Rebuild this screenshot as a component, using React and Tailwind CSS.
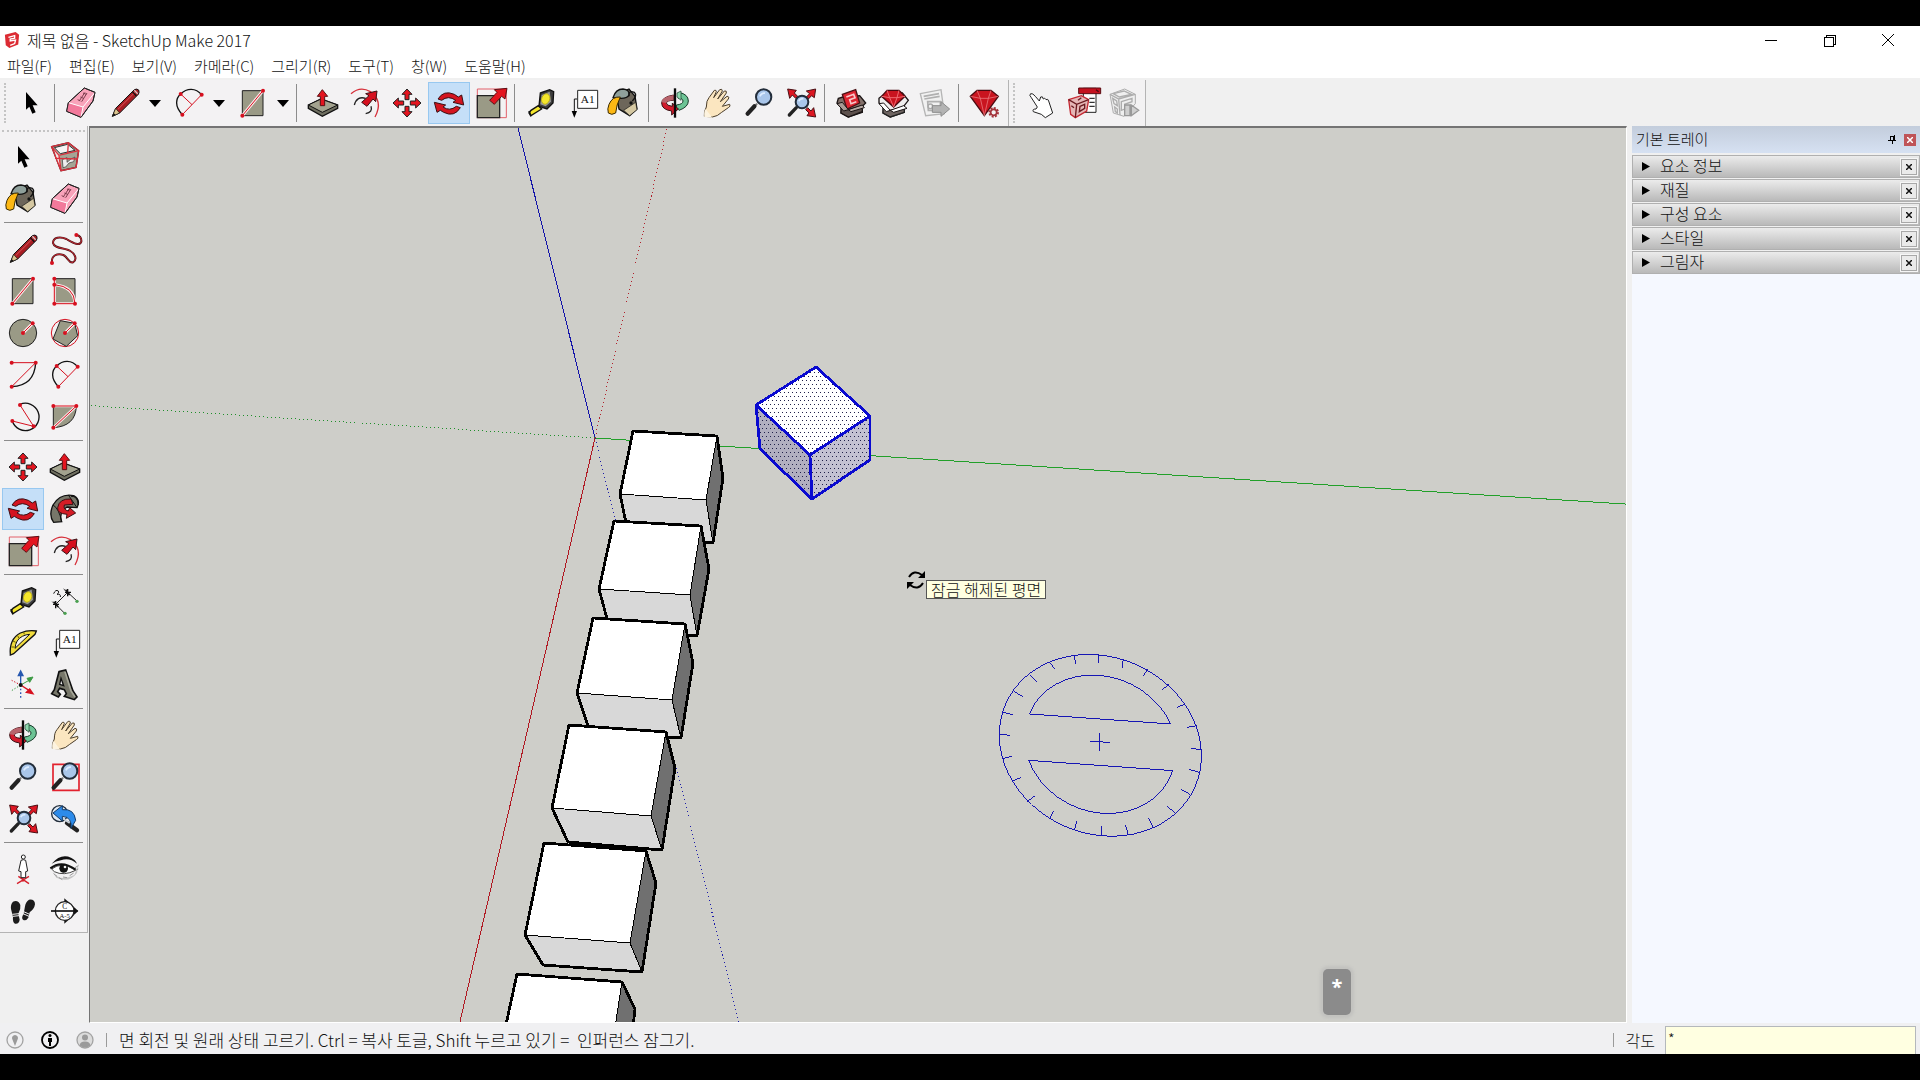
import React from "react";

const RED = "#d6101f";
const TAUPE = "#9a9a86";

const Icon = ({ children }) => (
  <svg viewBox="0 0 96 96" className="block h-8 w-8 overflow-visible" fill="none" aria-hidden="true">
    {children}
  </svg>
);

const Dots = ({ points }) =>
  points.map(([x, y]) => <circle key={`${x}-${y}`} cx={x} cy={y} r="6" fill={RED} />);

const SelectIcon = () => (
  <Icon>
    <path d="M33 15V68L43 59L52 80L62 76L53 55H68Z" fill="#000" />
  </Icon>
);

const ComponentIcon = () => (
  <Icon>
    <path d="M8 17L58 5L89 29L81 79L36 89Z" fill="#a5a595" stroke="#222" strokeWidth="4" />
    <path d="M14 20L32 42L36 84L24 60Z" fill="#f0e4e4" />
    <path d="M16 20L56 10L78 28L34 38Z" fill="#f4f4f4" stroke="#333" strokeWidth="3" />
    <path d="M40 56L54 50V64L66 54L78 48L74 62L60 66L50 78L42 80Z" fill="#eee" stroke="#333" strokeWidth="2" />
    <path d="M8 17L58 5L89 29L81 79L36 89ZM8 17L30 43L89 29M30 43L36 89M58 5L56 36M18 52L86 54" stroke="#d9303c" strokeWidth="4" />
  </Icon>
);

const PaintIcon = () => (
  <Icon>
    <path d="M22 22L60 6L78 28L84 66L62 86L30 66Z" fill="#6d665a" stroke="#111" strokeWidth="4" />
    <path d="M44 70L80 46L84 68L62 86Z" fill="#d5c8a2" stroke="#111" strokeWidth="2" />
    <path d="M12 32Q20 6 42 6Q62 8 60 24Q54 36 30 34Z" fill="#8fa09b" stroke="#111" strokeWidth="4" />
    <path d="M60 28Q58 8 76 16Q86 26 70 42" stroke="#111" strokeWidth="4" />
    <circle cx="66" cy="48" r="5" fill="#111" />
    <path d="M34 30Q10 28 0 52Q-6 66 -2 78Q8 86 20 78Q22 54 34 30Z" fill="#fdb813" stroke="#3a2a00" strokeWidth="3" />
  </Icon>
);

const EraserIcon = () => (
  <Icon>
    <path d="M58 3L90 16L84 42L48 91L5 73L10 47Z" fill="#f9a3ba" stroke="#222" strokeWidth="3" strokeLinejoin="round" />
    <path d="M10 47L54 60L48 91L5 73Z" fill="#f2799b" />
    <path d="M10 47L54 60L90 16M54 60L48 91" stroke="#fff" strokeWidth="3" />
    <path d="M44 40L60 16M50 44L66 18M38 38L46 42M46 30L56 34M54 18L64 22" stroke="#7a3c4c" strokeWidth="3" />
    <path d="M58 3L90 16L84 42L48 91L5 73L10 47Z" stroke="#222" strokeWidth="3" strokeLinejoin="round" />
  </Icon>
);

const LineIcon = () => (
  <Icon>
    <path d="M10 88L20 64L76 8Q84 4 89 9Q92 16 88 22L32 78Z" fill="#a81c22" stroke="#111" strokeWidth="3" />
    <path d="M26 68L78 16" stroke="#d8555a" strokeWidth="3" />
    <path d="M10 88L20 64L32 78Z" fill="#dcc58f" stroke="#111" strokeWidth="2" />
    <path d="M10 88L14 78L20 84Z" fill="#111" />
    <path d="M70 14L82 27" stroke="#111" strokeWidth="4" />
    <path d="M76 10L86 20" stroke="#d9c7c7" strokeWidth="4" />
  </Icon>
);

const FreehandIcon = () => (
  <Icon>
    <path
      d="M9 90C6 66 26 60 43 66C58 72 58 92 72 88C86 80 78 62 64 54C50 44 16 48 12 30C12 12 34 10 52 18C70 28 92 42 97 26C98 14 92 8 82 6"
      stroke="#4a1216"
      strokeWidth="6"
    />
    <path
      d="M9 90C6 66 26 60 43 66C58 72 58 92 72 88C86 80 78 62 64 54C50 44 16 48 12 30C12 12 34 10 52 18C70 28 92 42 97 26C98 14 92 8 82 6"
      stroke="#c42832"
      strokeWidth="3"
    />
    <Dots points={[[9, 90], [82, 6]]} />
  </Icon>
);

const RectIcon = () => (
  <Icon>
    <path d="M16 11H78V86H16Z" fill={TAUPE} stroke="#222" strokeWidth="3" />
    <path d="M16 86L78 11" stroke="#fbeaea" strokeWidth="9" />
    <path d="M16 86L78 11" stroke={RED} strokeWidth="3" />
    <Dots points={[[16, 86], [78, 11]]} />
  </Icon>
);

const RotatedRectIcon = () => (
  <Icon>
    <path d="M16 11H78V86H16Z" fill={TAUPE} stroke="#222" strokeWidth="3" />
    <path d="M16 11V86H78Q76 34 16 29" stroke="#fbeaea" strokeWidth="9" />
    <path d="M16 11V86H78Q76 34 16 29" stroke={RED} strokeWidth="3" />
    <Dots points={[[16, 11], [16, 29], [16, 86], [78, 86]]} />
  </Icon>
);

const CircleIcon = () => (
  <Icon>
    <circle cx="48" cy="48" r="41" fill={TAUPE} stroke="#222" strokeWidth="3" />
    <path d="M48 48L77 19" stroke="#fbeaea" strokeWidth="9" />
    <path d="M48 48L77 19" stroke={RED} strokeWidth="3" />
    <Dots points={[[48, 48], [77, 19]]} />
  </Icon>
);

const PolygonIcon = () => (
  <Icon>
    <circle cx="48" cy="48" r="41" stroke={RED} strokeWidth="3" />
    <path d="M34 11L77 19L86 56L52 88L12 66Z" fill={TAUPE} stroke="#222" strokeWidth="3" />
    <path d="M48 48L77 19" stroke="#fbeaea" strokeWidth="9" />
    <path d="M48 48L77 19" stroke={RED} strokeWidth="3" />
    <Dots points={[[48, 48], [77, 19]]} />
  </Icon>
);

const ArcIcon = () => (
  <Icon>
    <path d="M14 83Q82 80 86 11" stroke="#111" strokeWidth="4" />
    <path d="M14 11H86L14 83" stroke={RED} strokeWidth="3" />
    <Dots points={[[14, 11], [86, 11], [14, 83]]} />
  </Icon>
);

const TwoPointArcIcon = () => (
  <Icon>
    <path d="M28 83C4 58 8 34 23 21C42 2 68 2 86 23" stroke="#111" strokeWidth="4" />
    <path d="M28 83L86 23M23 21L57 53" stroke={RED} strokeWidth="3" />
    <Dots points={[[23, 21], [86, 23], [28, 83]]} />
  </Icon>
);

const ThreePointArcIcon = () => (
  <Icon>
    <path d="M39 10A41 41 0 1 1 16 60" stroke="#111" strokeWidth="4" />
    <path d="M39 12L80 76L16 60" stroke={RED} strokeWidth="3" />
    <Dots points={[[39, 12], [16, 60], [80, 76]]} />
  </Icon>
);

const PieIcon = () => (
  <Icon>
    <path d="M13 15H82Q80 76 13 80Z" fill={TAUPE} stroke="#222" strokeWidth="3" />
    <path d="M13 80L82 15H13" stroke="#fbeaea" strokeWidth="8" />
    <path d="M13 80L82 15H13" stroke={RED} strokeWidth="3" />
    <Dots points={[[13, 15], [82, 15], [13, 80]]} />
  </Icon>
);

const MoveIcon = () => (
  <Icon>
    {[0, 90, 180, 270].map((turn) => (
      <path
        key={turn}
        transform={`rotate(${turn} 48 48)`}
        d="M48 6L63 22H54V38H42V22H33Z"
        fill="#e3141f"
        stroke="#222"
        strokeWidth="3"
      />
    ))}
  </Icon>
);

const PushPullIcon = () => (
  <Icon>
    <path d="M4 54L42 36L92 54V64L46 88L4 64Z" fill="#6f6f60" stroke="#111" strokeWidth="4" />
    <path d="M4 54L42 36L92 54L46 76Z" fill="#a3a38f" stroke="#111" strokeWidth="3" />
    <path d="M46 8L62 28H53V56H40V28H31Z" fill="#e3141f" stroke="#5a1014" strokeWidth="3" />
  </Icon>
);

const RotateIcon = () => (
  <Icon>
    <path d="M15 36Q32 8 64 22L76 30L86 24L92 54L60 46L68 40Q46 24 26 40Z" fill="#d41420" stroke="#3a1014" strokeWidth="3" />
    <path d="M82 62Q64 92 32 76L22 70L12 76L4 46L38 54L30 60Q50 74 70 58Z" fill="#d41420" stroke="#3a1014" strokeWidth="3" />
  </Icon>
);

const FollowMeIcon = () => (
  <Icon>
    <path d="M74 8Q34 0 12 36Q-2 68 14 88L38 86Q28 58 54 42L84 44Q96 20 74 8Z" fill="#77776a" stroke="#111" strokeWidth="4" />
    <path d="M12 36Q30 46 38 86M58 6L84 44M66 10Q86 8 88 36" stroke="#111" strokeWidth="3" />
    <path d="M66 18Q30 16 26 44Q24 62 54 64L52 76L80 60L62 44L58 54Q42 50 46 36L72 34Z" fill="#d41c26" stroke="#3a1014" strokeWidth="3" />
  </Icon>
);

const ScaleIcon = () => (
  <Icon>
    <path d="M7 6H94V92H7Z" stroke="#e2606a" strokeWidth="3" />
    <path d="M7 26H74V92H7Z" fill={TAUPE} stroke="#222" strokeWidth="4" />
    <path d="M96 4L90 36L80 28L58 52L44 40L66 16L58 8Z" fill="#e3141f" stroke="#5a1014" strokeWidth="3" />
  </Icon>
);

const OffsetIcon = () => (
  <Icon>
    <path d="M6 20Q34 -4 64 14Q104 42 78 90" stroke="#d6303a" strokeWidth="4" />
    <path d="M16 54Q24 26 50 34M66 58Q72 76 50 80" stroke="#222" strokeWidth="4" />
    <path d="M84 12L80 44L72 36L54 58L38 46L60 26L50 20Z" fill="#d6101f" stroke="#3a1014" strokeWidth="3" />
  </Icon>
);

const TapeIcon = () => (
  <Icon>
    <path d="M40 56L18 70L12 78L18 86L50 66Z" fill="#f4e62c" stroke="#111" strokeWidth="4" />
    <path d="M12 72L18 88" stroke="#111" strokeWidth="5" />
    <path d="M46 18L74 8L86 14L84 48L66 66L42 58Z" fill="#3d3d3d" stroke="#111" strokeWidth="4" />
    <path d="M50 24L74 14L78 44L62 58L46 52Z" fill="#9a9a9a" />
    <ellipse cx="62" cy="36" rx="12" ry="16" fill="#f4e62c" stroke="#b8a900" strokeWidth="2" transform="rotate(20 62 36)" />
  </Icon>
);

const DimensionIcon = () => (
  <Icon>
    <path d="M20 58L56 22L84 48M20 58L46 84M10 50L24 64M44 12L60 28" stroke="#222" strokeWidth="3" />
    <path d="M12 58H30M20 48V70M48 22H66M56 12V34M14 50L28 66M50 14L62 30" stroke="#111" strokeWidth="4" />
    <path d="M14 26Q20 12 28 18Q32 24 24 28Q36 26 34 36" stroke="#111" strokeWidth="3" />
    <circle cx="84" cy="49" r="5" fill="#4aa050" />
    <circle cx="48" cy="85" r="5" fill="#4aa050" />
  </Icon>
);

const ProtractorIcon = () => (
  <Icon>
    <path d="M10 84Q6 36 40 18Q64 8 88 12L84 22L20 80Z" fill="#f1dc3e" stroke="#111" strokeWidth="4" />
    <path d="M24 64Q26 38 46 28Q58 22 68 22Z" fill="#f3f2f3" stroke="#111" strokeWidth="3" />
    <path d="M14 60L22 60M18 42L26 46M32 26L36 34M50 16L52 22" stroke="#6b5f00" strokeWidth="3" />
  </Icon>
);

const TextIcon = () => (
  <Icon>
    <path d="M32 10H92V64H32Z" fill="#fff" stroke="#222" strokeWidth="3" />
    <path d="M30 36H22V74" stroke="#111" strokeWidth="3" />
    <path d="M14 72H30L22 92Z" fill="#000" />
    <text x="62" y="48" textAnchor="middle" fontSize="34" fill="#111" fontFamily="Liberation Serif, serif">
      A1
    </text>
  </Icon>
);

const AxesIcon = () => (
  <Icon>
    <path d="M41 48V88" stroke="#3057b5" strokeWidth="4" strokeDasharray="5 6" />
    <path d="M41 48L14 34" stroke={RED} strokeWidth="3" strokeDasharray="4 5" />
    <path d="M41 48L12 66" stroke="#3d9b45" strokeWidth="3" strokeDasharray="4 5" />
    <path d="M41 48V18M34 20L41 6L48 20Z" fill="#2557b0" stroke="#2557b0" strokeWidth="4" />
    <path d="M41 48L66 34M60 28L78 24L68 40Z" fill="#3d9b45" stroke="#3d9b45" strokeWidth="3" />
    <path d="M41 48L66 64M68 60L78 74L58 70Z" fill={RED} stroke={RED} strokeWidth="4" />
    <circle cx="41" cy="48" r="6" fill="#111" />
  </Icon>
);

const Text3dIcon = () => (
  <Icon>
    <path d="M30 8L50 3L72 66L84 84L76 92L46 82L52 74L46 62L32 58L26 68L34 76L28 84L8 74L16 62Z" fill="#77776a" stroke="#111" strokeWidth="5" />
    <path d="M36 28L44 50L32 46Z" fill="#f3f2f3" stroke="#111" strokeWidth="4" />
    <path d="M48 8L66 66L78 84" stroke="#a6a698" strokeWidth="5" />
  </Icon>
);

const OrbitIcon = () => (
  <Icon>
    <path d="M60 16Q88 22 88 42Q88 60 60 70L52 62V54Q72 52 72 42Q72 34 58 34Z" fill="#6cc495" stroke="#163a28" strokeWidth="3" />
    <path d="M44 24Q8 30 8 48Q8 68 38 72V84L58 66L40 48V58Q22 56 22 48Q24 40 44 40Z" fill="#d21a2b" stroke="#3a1014" strokeWidth="3" />
    <path d="M44 24Q8 30 8 46L22 48Q24 40 44 40Z" fill="#b8636b" />
    <path d="M48 4V92" stroke="#0b0b0b" strokeWidth="7" />
    <path d="M54 18L66 12V40L54 30Z" fill="#8ed8ae" stroke="#163a28" strokeWidth="2" />
  </Icon>
);

const PanIcon = () => (
  <Icon>
    <path
      d="M10 88Q8 74 16 60Q16 40 24 32L40 10Q46 8 46 14L38 32L56 8Q64 4 64 12L50 36L70 12Q78 10 76 18L58 44L78 28Q86 28 82 36L64 58L86 52Q90 58 82 62L62 76Q50 88 34 90Z"
      fill="#fbe6c0"
      stroke="#4a3d2a"
      strokeWidth="3"
      strokeLinejoin="round"
    />
    <path d="M10 90Q8 74 14 66L34 92Z" fill="#fdf3df" />
  </Icon>
);

const Lens = ({ cx = 62, cy = 30, r = 23 }) => (
  <>
    <circle cx={cx} cy={cy} r={r} fill="#a9c6ea" stroke="#222d3a" strokeWidth="6" />
    <path d={`M${cx - r / 2} ${cy - 2}Q${cx - 6} ${cy - r / 2 - 2} ${cx + 4} ${cy - r / 2}`} stroke="#dcecff" strokeWidth="5" />
  </>
);

const ZoomIcon = () => (
  <Icon>
    <path d="M42 50L34 60" stroke="#777" strokeWidth="6" />
    <path d="M34 58L14 80" stroke="#222" strokeWidth="13" strokeLinecap="round" />
    <Lens />
  </Icon>
);

const ZoomWindowIcon = () => (
  <Icon>
    <path d="M12 10H90V88H12Z" stroke="#e2222e" strokeWidth="5" />
    <path d="M42 50L34 60" stroke="#777" strokeWidth="6" />
    <path d="M34 58L14 80" stroke="#222" strokeWidth="13" strokeLinecap="round" />
    <Lens />
  </Icon>
);

const ZoomExtentsIcon = () => (
  <Icon>
    {[0, 90, 180].map((turn) => (
      <path
        key={turn}
        transform={`rotate(${turn} 50 48)`}
        d="M8 6L34 10L28 18L38 28L32 34L22 24L14 34Z"
        fill="#dc1622"
        stroke="#4a1014"
        strokeWidth="3"
      />
    ))}
    <path d="M34 62L13 84" stroke="#222" strokeWidth="10" strokeLinecap="round" />
    <Lens cx={51} cy={45} r={19} />
  </Icon>
);

const PreviousIcon = () => (
  <Icon>
    <circle cx="32" cy="32" r="24" fill="#dfe9f4" stroke="#222d3a" strokeWidth="4" />
    <path d="M54 60L84 82" stroke="#222" strokeWidth="13" strokeLinecap="round" />
    <path d="M42 46Q52 54 62 60" stroke="#c9d3dd" strokeWidth="5" />
    <path d="M12 30L40 8V20Q76 16 80 52L66 76Q70 42 40 40V54Z" fill="#2c8bea" stroke="#123a66" strokeWidth="3" />
  </Icon>
);

const PositionCameraIcon = () => (
  <Icon>
    <path d="M30 92L66 70M66 92L34 70M48 64V86" stroke="#d6202c" strokeWidth="4" />
    <circle cx="49" cy="12" r="6" fill="#fff" stroke="#222" strokeWidth="3" />
    <path d="M42 22Q49 18 56 22L62 54L56 56V74H42V56L35 54Z" fill="#fff" stroke="#222" strokeWidth="3" />
  </Icon>
);

const LookAroundIcon = () => (
  <Icon>
    <path d="M8 32Q36 0 66 14Q80 20 84 32Q60 12 36 22Q20 24 8 32Z" fill="#111" />
    <path d="M10 56Q34 88 76 66L90 30L84 60Q60 92 22 74Z" fill="#c4c4c4" />
    <path d="M8 48Q38 24 80 52Q44 70 16 56Z" fill="#fff" stroke="#444" strokeWidth="3" />
    <path d="M4 46Q38 20 80 50" stroke="#111" strokeWidth="6" />
    <circle cx="44" cy="46" r="13" fill="#111" />
    <circle cx="48" cy="42" r="4" fill="#eee" />
    <path d="M14 62L24 70M30 74L40 80M42 72L54 74M62 68L74 60M78 44L88 38M80 52L88 48" stroke="#999" strokeWidth="3" />
  </Icon>
);

const WalkIcon = () => (
  <Icon>
    <path d="M18 20Q34 14 40 30Q42 44 34 56L38 74Q36 88 24 86Q16 82 18 66L12 42Q10 28 18 20Z" fill="#1c1c1c" />
    <path d="M66 14Q84 12 84 28Q82 42 68 52L64 68Q56 80 48 74Q42 68 50 56L54 34Q56 20 66 14Z" fill="#1c1c1c" />
    <path d="M16 58L36 56M18 64L36 62M50 50L68 58M48 56L66 64" stroke="#f3f2f3" strokeWidth="3" />
  </Icon>
);

const SectionIcon = () => (
  <Icon>
    <path d="M46 10L88 48L46 86Z" fill="#111" />
    <circle cx="47" cy="48" r="28" fill="#fff" stroke="#222" strokeWidth="4" />
    <path d="M6 48H86" stroke="#111" strokeWidth="5" />
    <text x="47" y="42" textAnchor="middle" fontSize="22" fill="#111" fontFamily="Liberation Serif, serif">
      C
    </text>
    <text x="47" y="69" textAnchor="middle" fontSize="20" fill="#111" fontFamily="Liberation Serif, serif">
      A-5
    </text>
  </Icon>
);

const WarehouseIcon = () => (
  <Icon>
    <path d="M10 34L24 30L74 26L92 48L80 60L82 76L40 90L18 78L20 62L6 48Z" fill="#82706a" stroke="#1a1414" strokeWidth="4" />
    <path d="M22 22L62 8L74 48L36 66Z" fill="#dd2430" stroke="#4a1014" strokeWidth="4" />
    <path d="M34 30L56 22L60 32L44 38L48 50L64 44" stroke="#f7c8ca" strokeWidth="5" />
    <path d="M18 62L40 68L82 56V74L40 90L18 78Z" fill="#5d514d" stroke="#1a1414" strokeWidth="4" />
    <path d="M6 50L22 46L40 68L26 72Z" fill="#a99a94" stroke="#1a1414" strokeWidth="3" />
    <path d="M40 68L48 74L88 62L82 54Z" fill="#b8aaa4" stroke="#1a1414" strokeWidth="3" />
  </Icon>
);

const ExtensionWarehouseIcon = () => (
  <Icon>
    <path d="M6 34L24 20L76 18L94 40L80 58L82 76L40 90L18 78L20 60L6 48Z" fill="#f0eeee" stroke="#1a1414" strokeWidth="4" />
    <path d="M14 28L30 10H66L84 28L50 60Z" fill="#c9141f" stroke="#4a0a10" strokeWidth="4" />
    <path d="M14 28L38 32L60 32L84 28M30 10L38 32L50 60L60 32L66 10" stroke="#ef6a70" strokeWidth="3" />
    <path d="M18 62L40 70L82 60V76L40 90L18 78Z" fill="#6e6461" stroke="#222" strokeWidth="4" />
    <path d="M6 50L20 48L40 70L28 74Z" fill="#fff" stroke="#1a1414" strokeWidth="3" />
    <path d="M40 70L50 76L90 64L80 56Z" fill="#fff" stroke="#1a1414" strokeWidth="3" />
  </Icon>
);

const LayoutIcon = () => (
  <Icon>
    <path d="M4 20L66 8L76 80L20 86Z" fill="#f1f1f1" stroke="#b5b5b5" strokeWidth="4" />
    <path d="M14 28L60 20M16 36L62 28M26 44H64V70H28Z" stroke="#b0b0b0" strokeWidth="5" />
    <circle cx="34" cy="58" r="7" stroke="#aaa" strokeWidth="4" />
    <path d="M40 56H66V44L92 66L66 88V76H40Z" fill="#b3b3b3" stroke="#8c8c8c" strokeWidth="3" />
  </Icon>
);

const ExtensionManagerIcon = () => (
  <Icon>
    <path d="M4 28L24 10H66L88 28L46 86Z" fill="#c9141f" stroke="#4a0a10" strokeWidth="4" />
    <path d="M4 28L34 34H58L88 28M24 10L34 34L46 86L58 34L66 10" stroke="#f08a8e" strokeWidth="2" />
    <circle cx="74" cy="76" r="13" fill="#f3f2f3" stroke="#a3323a" strokeWidth="6" strokeDasharray="6 4" />
    <circle cx="74" cy="76" r="9" fill="#f3f2f3" stroke="#a3323a" strokeWidth="5" />
  </Icon>
);

const InteractIcon = () => (
  <Icon>
    <path
      d="M22 32Q14 24 20 20Q26 18 34 28L46 42L50 30Q56 26 58 36Q62 30 66 38Q72 34 74 42L86 78L64 92L52 82L28 74Q24 66 36 66L40 60Z"
      fill="#fff"
      stroke="#222"
      strokeWidth="3"
    />
  </Icon>
);

const ComponentOptionsIcon = () => (
  <Icon>
    <path d="M52 4H90V76H52Z" fill="#fff" stroke="#222" strokeWidth="3" />
    <path d="M38 3H104V20H38Z" fill="#c4121f" stroke="#5a0c12" strokeWidth="3" />
    <path d="M90 8L98 14" stroke="#4a0a10" strokeWidth="4" />
    <path d="M70 34H86M70 46H86M70 58H86" stroke="#333" strokeWidth="4" />
    <path d="M8 38L46 26L68 38L62 72L28 92L14 82Z" fill="#e5b6b6" stroke="#c42832" strokeWidth="4" />
    <path d="M8 38L32 52L68 38M32 52L28 92M16 56L24 62M42 58L56 52V64L40 74ZM46 32L36 40" stroke="#6a1a20" strokeWidth="4" />
  </Icon>
);

const ComponentAttributesIcon = () => (
  <Icon>
    <path d="M6 22L50 6L82 22V50L48 88L16 78Z" fill="#efefef" stroke="#adadad" strokeWidth="3" />
    <path d="M6 22L32 36L82 22M32 36L36 84M16 20L48 12L70 22L34 30ZM14 34L26 42L28 56L18 50ZM20 60L28 66V78L22 74ZM40 44L72 34V44L50 52V66L40 70Z" stroke="#adadad" strokeWidth="4" />
    <path d="M50 54H66V86H50ZM70 54L92 70L70 86Z" fill="#cfcfcf" stroke="#999" strokeWidth="4" />
  </Icon>
);

const tb = (label, icon, extra = {}) => ({ label, icon, ...extra });

const mainGroups = [
  [tb("선택", SelectIcon)],
  [
    tb("지우개", EraserIcon),
    tb("선", LineIcon, { menu: true }),
    tb("호", TwoPointArcIcon, { menu: true }),
    tb("직사각형", RectIcon, { menu: true }),
  ],
  [
    tb("밀기/끌기", PushPullIcon),
    tb("오프셋", OffsetIcon),
    tb("이동", MoveIcon),
    tb("회전", RotateIcon, { active: true }),
    tb("배율", ScaleIcon),
  ],
  [tb("줄자", TapeIcon), tb("텍스트", TextIcon), tb("페인트통", PaintIcon)],
  [tb("궤도", OrbitIcon), tb("화면 이동", PanIcon), tb("확대/축소", ZoomIcon), tb("범위 확대", ZoomExtentsIcon)],
  [tb("3D Warehouse", WarehouseIcon), tb("Extension Warehouse", ExtensionWarehouseIcon), tb("LayOut", LayoutIcon)],
  [tb("확장 관리자", ExtensionManagerIcon)],
];

const dynamicTools = [
  tb("상호 작용", InteractIcon),
  tb("구성 요소 옵션", ComponentOptionsIcon),
  tb("구성 요소 속성", ComponentAttributesIcon),
];

const sideGroups = [
  [tb("선택", SelectIcon), tb("구성 요소 만들기", ComponentIcon), tb("페인트통", PaintIcon), tb("지우개", EraserIcon)],
  [
    tb("선", LineIcon),
    tb("자유곡선", FreehandIcon),
    tb("직사각형", RectIcon),
    tb("회전된 직사각형", RotatedRectIcon),
    tb("원", CircleIcon),
    tb("다각형", PolygonIcon),
    tb("호", ArcIcon),
    tb("2점 호", TwoPointArcIcon),
    tb("3점 호", ThreePointArcIcon),
    tb("파이", PieIcon),
  ],
  [
    tb("이동", MoveIcon),
    tb("밀기/끌기", PushPullIcon),
    tb("회전", RotateIcon, { active: true }),
    tb("따라가기", FollowMeIcon),
    tb("배율", ScaleIcon),
    tb("오프셋", OffsetIcon),
  ],
  [
    tb("줄자", TapeIcon),
    tb("치수", DimensionIcon),
    tb("각도기", ProtractorIcon),
    tb("텍스트", TextIcon),
    tb("축", AxesIcon),
    tb("3D 텍스트", Text3dIcon),
  ],
  [
    tb("궤도", OrbitIcon),
    tb("화면 이동", PanIcon),
    tb("확대/축소", ZoomIcon),
    tb("창 확대", ZoomWindowIcon),
    tb("범위 확대", ZoomExtentsIcon),
    tb("이전", PreviousIcon),
  ],
  [
    tb("카메라 배치", PositionCameraIcon),
    tb("둘러보기", LookAroundIcon),
    tb("걷기", WalkIcon),
    tb("단면 평면", SectionIcon),
  ],
];

const menus = ["파일(F)", "편집(E)", "보기(V)", "카메라(C)", "그리기(R)", "도구(T)", "창(W)", "도움말(H)"];

const trayPanels = ["요소 정보", "재질", "구성 요소", "스타일", "그림자"];

function ToolButton({ label, icon: Glyph, active, menu }) {
  return (
    <>
      <button
        type="button"
        aria-label={label}
        aria-pressed={!!active}
        className={`flex h-[42px] shrink-0 items-center justify-center border ${
          menu ? "w-[46px]" : "w-[42px]"
        } ${active ? "border-[#98c8f0] bg-[#c5dff8]" : "border-transparent"}`}
      >
        <Glyph />
      </button>
      {menu && (
        <button type="button" aria-label={`${label} 메뉴`} className="mr-1 flex h-[42px] w-[14px] shrink-0 items-center justify-center">
          <svg viewBox="0 0 12 7" className="h-[7px] w-3" aria-hidden="true">
            <path d="M0 0H12L6 7Z" fill="#000" />
          </svg>
        </button>
      )}
    </>
  );
}

function TitleBar() {
  return (
    <header className="bg-white">
      <div className="flex h-7 items-center pl-1">
        <svg viewBox="0 0 18 20" className="h-[18px] w-4" aria-hidden="true">
          <path d="M1 4L13 1L17 4L16 15L6 19L2 16Z" fill="#dc2b33" />
          <path d="M5 7L12 5V8L7 9V11L13 10L12 14L7 16" stroke="#fff" strokeWidth="1.5" fill="none" />
        </svg>
        <h1 className="ml-[7px] text-[16px] leading-7 font-light">제목 없음 - SketchUp Make 2017</h1>
        <div className="ml-auto flex">
          <button type="button" aria-label="최소화" className="flex h-7 w-[58px] items-center justify-center">
            <svg viewBox="0 0 12 12" className="h-3 w-3" stroke="#000" shapeRendering="crispEdges">
              <path d="M0 6H12" />
            </svg>
          </button>
          <button type="button" aria-label="이전 크기로" className="flex h-7 w-[58px] items-center justify-center">
            <svg viewBox="0 0 13 13" className="h-[13px] w-[13px]" stroke="#000" fill="none" shapeRendering="crispEdges">
              <path d="M1 3H10V12H1ZM3 3V1H12V10H10" />
            </svg>
          </button>
          <button type="button" aria-label="닫기" className="flex h-7 w-[60px] items-center justify-center">
            <svg viewBox="0 0 12 12" className="h-3 w-3" stroke="#000">
              <path d="M0 0L12 12M12 0L0 12" />
            </svg>
          </button>
          <div className="w-[2px]" />
        </div>
      </div>
      <nav className="flex h-6 gap-[17px] pl-[7px]">
        {menus.map((menu) => (
          <button key={menu} type="button" className="text-[15px] leading-6">
            {menu}
          </button>
        ))}
      </nav>
    </header>
  );
}

function TopToolbar() {
  return (
    <div className="flex h-12 bg-[#f0f0f0] pt-[2px]">
      <div className="flex items-center border-r border-[#b4b4b4] bg-[#f3f2f3] pl-1">
        <div className="mr-1 h-10 border-l-2 border-dotted border-[#c4c4c4]" />
        {mainGroups.map((group, index) => (
          <React.Fragment key={index}>
            {index > 0 && <div className="ml-[2px] mr-[5px] h-[38px] w-px bg-[#8c8c8c]" />}
            {group.map((tool) => (
              <ToolButton key={tool.label} {...tool} />
            ))}
          </React.Fragment>
        ))}
        <div className="w-[2px]" />
      </div>
      <div className="flex items-center border-r border-[#b4b4b4] bg-[#f3f2f3] pl-1">
        <div className="mr-1 h-10 border-l-2 border-dotted border-[#c4c4c4]" />
        {dynamicTools.map((tool) => (
          <ToolButton key={tool.label} {...tool} />
        ))}
      </div>
    </div>
  );
}

function SideToolbar() {
  return (
    <aside className="w-[89px] shrink-0 bg-[#f0f0f0]">
      <div className="w-[88px] border-b border-r border-[#b4b4b4] bg-[#f3f2f3] px-[2px] pt-1">
        <div className="mb-1 h-[2px] border-t-2 border-dotted border-[#c4c4c4]" />
        {sideGroups.map((group, index) => (
          <React.Fragment key={index}>
            {index > 0 && <div className="mx-[2px] mb-[5px] mt-[2px] h-px bg-[#8c8c8c]" />}
            <div className="grid grid-cols-[42px_42px]">
              {group.map((tool) => (
                <ToolButton key={tool.label} {...tool} />
              ))}
            </div>
          </React.Fragment>
        ))}
      </div>
    </aside>
  );
}

// corners: back-left, back-right, front-right, front-left of the top, then right edge, bottom right, bottom left
const boxes = [
  [[633, 431], [717, 436], [706, 500], [620, 494], [723, 478], [713, 543], [629, 537]],
  [[614, 521], [701, 526], [690, 595], [599, 589], [709, 569], [697, 636], [610, 630]],
  [[593, 618], [685, 624], [672, 700], [577, 693], [693, 663], [681, 738], [590, 732]],
  [[569, 725], [666, 732], [651, 816], [552, 808], [675, 768], [662, 850], [568, 842]],
  [[544, 843], [646, 851], [630, 943], [525, 935], [656, 883], [642, 972], [543, 965]],
  [[517, 974], [622, 982], [606, 1085], [495, 1075], [635, 1009], [624, 1110], [515, 1100]],
];

const pts = (list) => list.map((p) => p.join(",")).join(" ");

function Box({ corners }) {
  const [a, b, c, d, e, f, g] = corners;
  return (
    <g stroke="#000" strokeLinejoin="round">
      <polygon points={pts([a, b, c, d])} fill="#fff" />
      <polygon points={pts([d, c, f, g])} fill="#d8d8d8" />
      <polygon points={pts([b, e, f, c])} fill="#707070" />
      <polygon points={pts([a, b, e, f, g, d])} fill="none" strokeWidth="2.8" />
    </g>
  );
}

const protractorTicks =
  "M626 284V308M700 297L696 323M773 327L760 349M837 373L817 389M886 432L861 442M920 497L891 502M935 569L903 565M928 637L897 628M900 703L874 688M854 759L832 738M790 802L775 774M715 824L706 795M634 829V797M554 810L560 783M478 777L491 753M412 725L434 708M368 663L392 653M337 596L366 589M329 523L360 526M340 457L369 464M372 394L398 410M420 344L440 365M482 310L494 328M553 287L557 311";

function Scene() {
  return (
    <svg
      viewBox="90 128 1536 894"
      preserveAspectRatio="xMidYMid slice"
      className="absolute inset-0 h-full w-full"
      fill="none"
      shapeRendering="crispEdges"
      role="img"
      aria-label="모델"
    >
      <defs>
        <pattern id="selected" width="4" height="8" patternUnits="userSpaceOnUse">
          <rect width="1" height="1" fill="#20204a" />
          <rect x="2" y="4" width="1" height="1" fill="#20204a" />
        </pattern>
      </defs>
      <path d="M595 438L516 120" stroke="#1414a8" />
      <path d="M595 438L1640 505" stroke="#22a02a" />
      <path d="M595 438L459 1026" stroke="#b01822" />
      <path d="M595 438L669 120" stroke="#b0202a" strokeDasharray="1 3" />
      <path d="M595 438L80 405" stroke="#1f8f2a" strokeDasharray="1 3" />
      <path d="M595 438L740 1026" stroke="#1c1ca8" strokeDasharray="1 3" />

      {boxes.map((corners, index) => (
        <Box key={index} corners={corners} />
      ))}

      <polygon points="816,367 870,416 810,454 756,405" fill="#fff" />
      <polygon points="756,405 810,454 812,499 760,449" fill="#b1afc0" />
      <polygon points="870,416 870,460 812,499 810,454" fill="#c3c1d2" />
      <polygon points="816,367 870,416 870,460 812,499 760,449 756,405" fill="url(#selected)" />
      <path
        d="M816 367L870 416V460L812 499L760 449L756 405ZM756 405L810 455L870 416M810 455L812 499"
        stroke="#0a0ad0"
        strokeWidth="2.8"
        strokeLinejoin="round"
      />

      <g transform="translate(890 560) scale(0.33333)" stroke="#1616b4" strokeWidth="3">
        <ellipse cx="631" cy="556" rx="310" ry="265" transform="rotate(23.5 631 556)" />
        <path d={protractorTicks} />
        <path d="M418 462A232 199 23.5 0 1 842 492Z" />
        <path d="M416 601A231 198 23.5 0 0 848 632Z" />
        <path d="M630 519V572M600 544L659 547" />
      </g>

      <g shapeRendering="auto">
        <path d="M909 577Q914 569 922 575M923 583Q918 591 910 585" stroke="#000" strokeWidth="2" />
        <path d="M925 571V578H918ZM907 589V582H914Z" fill="#000" />
      </g>
    </svg>
  );
}

function Tray() {
  return (
    <aside className="w-[288px] shrink-0 bg-[#f5f8ff]">
      <div className="flex h-[27px] items-center bg-gradient-to-b from-[#c3cddc] to-[#d6e1f2] pl-1 pr-1">
        <h2 className="pb-[2px] text-[15px] leading-6 font-light">기본 트레이</h2>
        <button type="button" aria-label="자동 숨기기" className="ml-auto flex h-4 w-4 items-center justify-center">
          <svg viewBox="0 0 8 9" className="h-[9px] w-2" fill="none" stroke="#000" shapeRendering="crispEdges">
            <path d="M2.5 5V1H6M6 0V5M5 1V5M0 5.5H8M4 6V9" />
          </svg>
        </button>
        <button type="button" aria-label="트레이 닫기" className="ml-1 flex h-3 w-3 items-center justify-center bg-[#bf5458]">
          <svg viewBox="0 0 6 6" className="h-[6px] w-[6px]" stroke="#fff" strokeWidth="1.5">
            <path d="M0 0L6 6M6 0L0 6" />
          </svg>
        </button>
      </div>
      <div className="flex flex-col gap-px bg-[#f0f0f0] pt-[2px]">
        {trayPanels.map((panel) => (
          <section
            key={panel}
            className="flex h-[23px] items-center border border-[#b0b0b0] bg-gradient-to-b from-[#ececec] to-[#b9b9b9] pl-[9px] pr-[2px]"
          >
            <button type="button" aria-expanded="false" className="flex flex-1 items-center gap-[10px] text-left text-[16px] leading-5 font-light">
              <svg viewBox="0 0 8 9" className="h-[9px] w-2" aria-hidden="true">
                <path d="M0 0L8 4.5L0 9Z" fill="#000" />
              </svg>
              <span className="pb-[3px]">{panel}</span>
            </button>
            <button
              type="button"
              aria-label={`${panel} 닫기`}
              className="flex h-4 w-4 items-center justify-center border border-[#a8a8a8] bg-[#eaeaea] outline outline-[#f6f6f6]"
            >
              <svg viewBox="0 0 6 6" className="h-[6px] w-[6px]" stroke="#111" strokeWidth="1.5">
                <path d="M0 0L6 6M6 0L0 6" />
              </svg>
            </button>
          </section>
        ))}
      </div>
    </aside>
  );
}

function StatusBar() {
  return (
    <footer className="flex h-[31px] shrink-0 items-center bg-[#f0f0f2] pl-[6px] pr-1 pt-[2px] font-light">
      <div className="flex gap-[17px]">
        <svg viewBox="0 0 18 18" className="h-[18px] w-[18px]" fill="none" aria-hidden="true">
          <circle cx="9" cy="9" r="8" stroke="#a3a3a3" strokeWidth="1.3" />
          <path d="M9 15L6.4 8.5A3 3 0 1 1 11.6 8.5Z" fill="#9a9a9a" />
        </svg>
        <svg viewBox="0 0 18 18" className="h-[18px] w-[18px]" fill="none" aria-hidden="true">
          <circle cx="9" cy="9" r="8" stroke="#000" strokeWidth="1.8" />
          <circle cx="9" cy="4.6" r="1.5" fill="#000" />
          <path d="M7 7H11V11H10V15H8V11H7Z" fill="#000" />
        </svg>
        <svg viewBox="0 0 18 18" className="h-[18px] w-[18px]" fill="none" aria-hidden="true">
          <circle cx="9" cy="9" r="8" fill="#dcdcdc" stroke="#a3a3a3" strokeWidth="1.3" />
          <circle cx="9" cy="6.5" r="3" fill="#9a9a9a" />
          <path d="M3.6 14.4Q4 10.5 9 10.5Q14 10.5 14.4 14.4Q9 18.5 3.6 14.4Z" fill="#9a9a9a" />
        </svg>
      </div>
      <div className="ml-3 h-[14px] w-px bg-[#9a9a9a]" />
      <p className="ml-3 whitespace-pre text-[17px] leading-6">
        {"면 회전 및 원래 상태 고르기. Ctrl = 복사 토글, Shift 누르고 있기 =  인퍼런스 잠그기."}
      </p>
      <div className="ml-auto h-[14px] w-px bg-[#9a9a9a]" />
      <label htmlFor="measurement" className="ml-3 text-[16px] leading-6">
        각도
      </label>
      <input
        id="measurement"
        type="text"
        defaultValue="*"
        className="ml-[10px] h-[28px] w-[251px] self-end border border-b-0 border-[#b4b8bc] bg-[#ffffe1] px-[2px] pb-1 text-[15px] outline-none"
      />
    </footer>
  );
}

export default function App() {
  return (
    <div className="flex h-screen flex-col overflow-hidden bg-black py-[26px] font-['Noto_Sans_CJK_KR',sans-serif] font-light text-[#111]">
      <TitleBar />
      <TopToolbar />
      <div className="flex min-h-0 flex-1 bg-[#f0f0f0]">
        <SideToolbar />
        <main className="relative min-w-0 flex-1 overflow-hidden border-b border-l border-r border-t-2 border-b-white border-l-[#747474] border-r-white border-t-[#747474] bg-[#cecec9]">
          <Scene />
          <div
            role="tooltip"
            className="absolute left-[836px] top-[452px] h-[19px] border border-[#555] bg-[#ffffe1] px-1 text-[16px] leading-[17px] whitespace-nowrap"
          >
            잠금 해제된 평면
          </div>
          <kbd className="absolute bottom-[7px] right-[275px] flex h-[46px] w-[28px] justify-center rounded-[5px] bg-[#8b8b8b] pt-[6px] font-['Open_Sans',sans-serif] text-[20px] leading-6 font-bold text-white shadow-[0_0_3px_3px_#c2c2bf]">
            *
          </kbd>
        </main>
        <div className="w-[5px] shrink-0" />
        <Tray />
      </div>
      <StatusBar />
    </div>
  );
}
